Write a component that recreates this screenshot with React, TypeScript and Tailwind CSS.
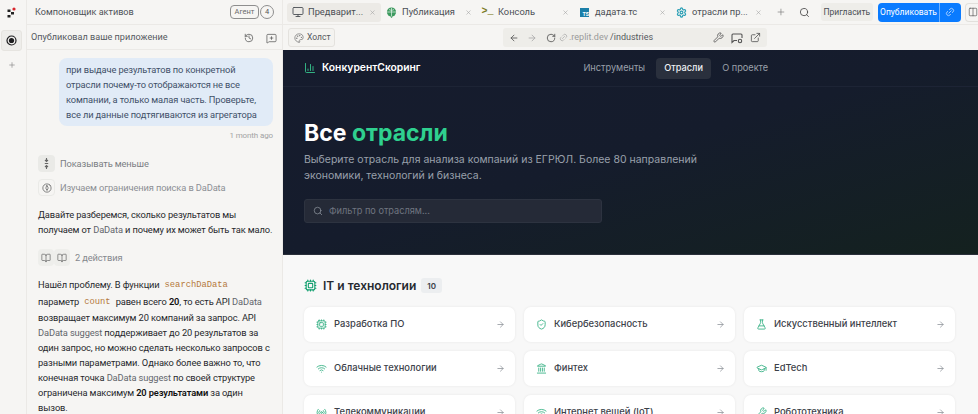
import React from "react";
import {
  ArrowLeft, ArrowRight, BookOpen, ChartColumn, Compass, Cpu, ExternalLink, FlaskConical, GraduationCap,
  History, Landmark, Link2, Monitor, Palette, Plus, Radio, RotateCw, Search, ShieldCheck, Wifi, Wrench, X,
  MessageSquarePlus, Columns2, Settings,
} from "lucide-react";

function Tab({ icon, label, active, w }: { icon: React.ReactNode; label: string; active?: boolean; w: string }) {
  return (
    <div className={`flex items-center h-[19px] rounded-[3px] pl-[3px] pr-[5px] shrink-0 ${w} ${active ? "bg-[#eceae6]" : ""}`}>
      <span className="w-[15px] flex justify-center shrink-0">{icon}</span>
      <span className="ml-[3px] text-[9.3px] text-[#4b4f55] whitespace-nowrap flex-1 font-['Roboto',sans-serif]">{label}</span>
      <X className="w-[7px] h-[7px] text-[#a3a3a3] shrink-0" strokeWidth={2} />
    </div>
  );
}

function Card({ icon, label }: { icon: React.ReactNode; label: string }) {
  return (
    <div className="h-[35px] rounded-[7px] bg-white shadow-[0_0_3px_rgba(0,0,0,0.07)] flex items-center pl-[10px] pr-[10px] min-w-0">
      <span className="w-[14px] flex justify-center shrink-0 text-[#3fb58a]">{icon}</span>
      <span className="ml-[6px] flex-1 text-[9.4px] font-medium text-[#3c4149] whitespace-nowrap">{label}</span>
      <ArrowRight className="w-[9px] h-[9px] text-[#8a8f96] shrink-0" strokeWidth={2} />
    </div>
  );
}

const ic = "w-[11px] h-[11px]";
const body = "text-[9.3px] tracking-[-0.12px]";

export default function App() {
  return (
    <div className="w-[978px] h-[414px] flex overflow-hidden bg-[#f6f5f3] font-['Inter',sans-serif]">
      {/* rail */}
      <div className="w-[27px] shrink-0 flex flex-col items-center pr-[3px] border-r border-[#ebe9e6]">
        <div className="h-[25px] w-full flex items-center justify-center">
          <svg width="9" height="11" viewBox="0 0 9 11">
            <rect x="0.5" y="2.5" width="3" height="2.5" fill="#222" />
            <rect x="4" y="5" width="3" height="2.5" fill="#222" />
            <rect x="0.5" y="8" width="3" height="2.5" fill="#222" />
            <circle cx="7" cy="2" r="1.6" fill="#d8262c" />
          </svg>
        </div>
        <div className="mt-[5px] w-[21px] h-[21px] rounded-[3px] bg-[#eeedea] border border-[#e6e4e0] flex items-center justify-center">
          <svg width="11" height="11" viewBox="0 0 11 11">
            <circle cx="5.5" cy="5.5" r="4.5" fill="none" stroke="#1d1d1f" strokeWidth="1.2" />
            <circle cx="5.5" cy="5.5" r="2.6" fill="#1d1d1f" />
          </svg>
        </div>
        <Plus className="mt-[10px] w-[8px] h-[8px] text-[#8a8a8a]" strokeWidth={2} />
      </div>

      {/* chat panel */}
      <div className="w-[256px] shrink-0 flex flex-col border-r border-[#ebe9e6] overflow-hidden font-['Roboto',sans-serif]">
        <div className="h-[25px] shrink-0 flex items-center pl-[8px] pr-[8px] border-b border-[#ebe9e6]">
          <span className="pt-[1px] text-[9.1px] text-[#4f5358] flex-1">Компоновщик активов</span>
          <span className="h-[14px] w-[29px] justify-center rounded-[4px] border border-[#8e8e8e] flex items-center text-[7.5px] text-[#6b6b6b]">Агент</span>
          <span className="ml-[1px] w-[14px] h-[14px] rounded-full border border-[#8e8e8e] flex items-center justify-center text-[7.5px] text-[#555]">4</span>
        </div>
        <div className="h-[25px] shrink-0 flex items-center pl-[4px] pr-[5px] pt-[2px] border-b border-[#ebe9e6]">
          <span className="text-[9.1px] text-[#55595e] flex-1">Опубликовал ваше приложение</span>
          <History className="w-[10px] h-[10px] text-[#555]" strokeWidth={1.8} />
          <MessageSquarePlus className="ml-[12px] w-[11px] h-[11px] text-[#555]" strokeWidth={1.6} />
        </div>

        <div className={`flex-1 flex flex-col pl-[11px] pr-[9px] overflow-hidden ${body}`}>
          <div className="mt-[8px] ml-[21px] rounded-[8px] bg-[#e1ebf7] px-[7px] pt-[4px] pb-[4px] leading-[15px] text-[#3f5068]">
            при выдаче результатов по конкретной отрасли почему-то отображаются не все компании, а только малая часть. Проверьте, все ли данные подтягиваются из агрегатора
          </div>
          <div className="mt-[4px] text-right text-[8px] leading-[11px] text-[#a3a3a3]">1 month ago</div>

          <div className="mt-[14px] flex items-center h-[17px]">
            <span className="w-[17px] h-[17px] rounded-[4px] bg-[#eaeae7] flex items-center justify-center">
              <svg width="9" height="11" viewBox="0 0 9 11" fill="none" stroke="#666" strokeWidth="1.1">
                <path d="M4.5 0v3.4M3 2l1.5 1.5L6 2M2.8 5.5h3.4M4.5 11V7.6M3 9l1.5-1.5L6 9" />
              </svg>
            </span>
            <span className="ml-[5px] text-[#7b7e83]">Показывать меньше</span>
          </div>
          <div className="mt-[7px] flex items-center h-[17px]">
            <span className="w-[17px] h-[17px] rounded-[4px] border border-[#eaeae7] flex items-center justify-center">
              <Compass className="w-[10px] h-[10px] text-[#666] -rotate-45" strokeWidth={1.8} />
            </span>
            <span className="ml-[5px] text-[#8c8f94]">Изучаем ограничения поиска в DaData</span>
          </div>

          <div className="mt-[11px] leading-[15px] text-[#26282c]">
            Давайте разберемся, сколько результатов мы получаем от <span className="text-[#62666c]">DaData</span> и почему их может быть так мало.
          </div>

          <div className="mt-[12px] flex items-center h-[17px]">
            <span className="w-[16px] h-[17px] rounded-[4px] bg-[#eeeeeb] flex items-center justify-center"><BookOpen className="w-[10px] h-[10px] text-[#666]" strokeWidth={1.7} /></span>
            <span className="w-[16px] h-[17px] rounded-[4px] bg-[#eeeeeb] flex items-center justify-center"><BookOpen className="w-[10px] h-[10px] text-[#666]" strokeWidth={1.7} /></span>
            <span className="ml-[5px] text-[#85888d]">2 действия</span>
          </div>

          <div className="mt-[10px] leading-[15px] text-[#26282c]">
            <div className="h-[17px] flex items-center whitespace-nowrap">Нашёл проблему. В функции<code className="ml-[5px] mt-[2px] font-['Liberation_Mono',monospace] tracking-normal text-[8.8px] text-[#b5793c]">searchDaData</code></div>
            <div className="h-[17px] flex items-center whitespace-nowrap">параметр<code className="mx-[5px] mt-[2px] font-['Liberation_Mono',monospace] tracking-normal text-[8.8px] text-[#b5793c]">count</code>равен всего&nbsp;<b className="font-semibold text-[#111]">20</b>, то есть API&nbsp;<span className="text-[#62666c]">DaData</span></div>
            <div>
              возвращает максимум 20 компаний за запрос. API <span className="text-[#62666c]">DaData suggest</span> поддерживает до 20 результатов за один запрос, но можно сделать несколько запросов с разными параметрами. Однако более важно то, что конечная точка <span className="text-[#62666c]">DaData suggest</span> по своей структуре ограничена максимум <b className="font-semibold text-[#111]">20 результатами</b> за один вызов.
            </div>
          </div>
        </div>
      </div>

      {/* right */}
      <div className="flex-1 min-w-0 flex flex-col overflow-hidden">
        <div className="h-[25px] shrink-0 flex items-center pl-[4px] border-b border-[#ebe9e6]">
          <Tab w="w-[94px]" active label="Предварит..." icon={<Monitor className="w-[12px] h-[12px] text-[#4b4f55]" strokeWidth={1.8} />} />
          <Tab w="w-[96px]" label="Публикация" icon={<svg width="11" height="11" viewBox="0 0 11 11"><circle cx="5.5" cy="5" r="4.6" fill="#3d9a5f" /><path d="M1 5h9M5.5 1v8M3 2.5c1.5 1 3.5 1 5 0" stroke="#e8f3ec" strokeWidth="0.7" fill="none" /><path d="M4 9.5h3L5.5 11z" fill="#3d9a5f" /></svg>} />
          <Tab w="w-[97px]" label="Консоль" icon={<span className="font-['Liberation_Mono',monospace] text-[10px] font-bold leading-none text-[#7a7a22]">&gt;_</span>} />
          <Tab w="w-[97px]" label="дадата.тс" icon={<span className="w-[9px] h-[9px] bg-[#1c7fa8] text-white text-[5px] font-bold leading-none flex items-end justify-end">TS</span>} />
          <Tab w="w-[96px]" label="отрасли пр..." icon={<Settings className={`${ic} text-[#2b9fb5]`} strokeWidth={2.6} />} />
          <Plus className="ml-[9px] w-[10px] h-[10px] text-[#777]" strokeWidth={1.6} />
          <Search className="ml-[13px] w-[11px] h-[11px] text-[#444]" strokeWidth={1.8} />
          <span className="ml-[11px] h-[18px] w-[53px] justify-center rounded-[3px] bg-[#eeede9] flex items-center text-[8.5px] text-[#4b4f55] font-['Roboto',sans-serif]">Пригласить</span>
          <span className="ml-[5px] h-[19px] w-[83px] rounded-[4px] bg-[#0a7bff] flex items-center text-white shrink-0 font-['Roboto',sans-serif]">
            <span className="w-[62px] text-center text-[8.5px] border-r border-[#6fb1ff] leading-[19px]">Опубликовать</span>
            <Link2 className="ml-[5px] w-[10px] h-[10px] text-[#cfe4ff] -rotate-45" strokeWidth={1.8} />
          </span>
          <span className="ml-[4px] h-[19px] flex-1 rounded-l-[4px] border border-r-0 border-[#e2e0dc] flex items-center pl-[2px] shrink-0">
            <Columns2 className="w-[10px] h-[10px] text-[#555]" strokeWidth={1.6} />
          </span>
        </div>

        <div className="h-[25px] shrink-0 flex items-center pl-[5px]">
          <span className="h-[19px] w-[47px] rounded-[3px] border border-[#e4e2de] bg-[#f4f3f0] flex items-center pl-[5px] font-['Roboto',sans-serif]">
            <Palette className="w-[10px] h-[10px] text-[#777]" strokeWidth={1.8} />
            <span className="ml-[3px] text-[8.5px] text-[#55595e]">Холст</span>
          </span>
          <div className="ml-[168px] h-[19px] w-[264px] flex items-center rounded-[3px] bg-[#eeede9] font-['Roboto',sans-serif]">
            <ArrowLeft className="ml-[6px] w-[10px] h-[10px] text-[#555]" strokeWidth={2} />
            <ArrowRight className="ml-[8px] w-[10px] h-[10px] text-[#aaa]" strokeWidth={2} />
            <RotateCw className="ml-[9px] w-[10px] h-[10px] text-[#444]" strokeWidth={1.8} />
            <span className="ml-[3px] flex-1 h-full flex items-center">
              <Link2 className="w-[9px] h-[9px] text-[#aaa] -rotate-45" strokeWidth={1.8} />
              <span className="ml-[1px] text-[9px] text-[#9a9a9a]">.replit.dev</span>
              <span className="ml-[2px] text-[9px] text-[#55595e]">/industries</span>
            </span>
            <Wrench className="w-[11px] h-[11px] text-[#555]" strokeWidth={1.8} />
            <svg className="ml-[7px] w-[12px] h-[12px]" viewBox="0 0 12 12" fill="none" stroke="#555" strokeWidth="1.1">
              <path d="M6 8.5H3L1 10.5V3a1 1 0 0 1 1-1h8a1 1 0 0 1 1 1v3" />
              <circle cx="9" cy="9" r="1.7" />
            </svg>
            <ExternalLink className="ml-[7px] mr-[6px] w-[11px] h-[11px] text-[#555]" strokeWidth={1.8} />
          </div>
        </div>

        <div className="h-[205px] shrink-0 flex flex-col bg-gradient-to-br from-[#161c2e] via-[#151c2c] to-[#14211f] border-b border-[#2a2f3a]">
          <div className="h-[37px] shrink-0 flex items-center border-b border-[#1d2435] pl-[21px]">
            <ChartColumn className="w-[12px] h-[12px] text-[#35c48d]" strokeWidth={1.8} />
            <span className="ml-[6px] text-[10.3px] font-semibold text-white">КонкурентСкоринг</span>
            <nav className="ml-[163px] flex items-center text-[9.2px] text-[#9aa0aa]">
              <span>Инструменты</span>
              <span className="ml-[11px] h-[21px] w-[55px] justify-center rounded-[4px] bg-[#2a303d] text-[#eef0f3] font-medium flex items-center">Отрасли</span>
              <span className="ml-[11px]">О проекте</span>
            </nav>
          </div>
          <div className="pl-[21px] pt-[31px]">
            <h1 className="text-[23px] leading-[30px] font-bold text-white">Все <span className="text-[#2fd08f]">отрасли</span></h1>
            <p className="mt-[4px] w-[410px] text-[10.5px] leading-[16px] text-[#99a0ab]">
              Выберите отрасль для анализа компаний из ЕГРЮЛ. Более 80 направлений экономики, технологий и бизнеса.
            </p>
            <div className="mt-[15px] w-[298px] h-[24px] rounded-[3px] bg-[#252a37] border border-[#2d3340] flex items-center pl-[8px]">
              <Search className="w-[10px] h-[10px] text-[#8c929c]" strokeWidth={1.8} />
              <span className="ml-[6px] text-[9.2px] text-[#6f7580]">Фильтр по отраслям...</span>
            </div>
          </div>
        </div>

        <div className="flex-1 bg-[#f8f8f8] pl-[21px] pr-[23px] pt-[23px] overflow-hidden">
          <div className="flex items-center h-[15px]">
            <Cpu className="w-[13px] h-[13px] text-[#14a070]" strokeWidth={2} />
            <span className="ml-[6px] text-[12px] font-semibold text-[#262a30]">IT и технологии</span>
            <span className="ml-[5px] h-[15px] px-[6px] rounded-[3px] bg-[#eceef0] flex items-center text-[8px] font-semibold text-[#3c4149]">10</span>
          </div>
          <div className="mt-[14px] grid grid-cols-3 gap-x-[9px] gap-y-[9px]">
            <Card label="Разработка ПО" icon={<Cpu className={ic} strokeWidth={2} />} />
            <Card label="Кибербезопасность" icon={<ShieldCheck className={ic} strokeWidth={2} />} />
            <Card label="Искусственный интеллект" icon={<FlaskConical className={ic} strokeWidth={2} />} />
            <Card label="Облачные технологии" icon={<Wifi className={ic} strokeWidth={2} />} />
            <Card label="Финтех" icon={<Landmark className={ic} strokeWidth={2} />} />
            <Card label="EdTech" icon={<GraduationCap className={ic} strokeWidth={2} />} />
            <Card label="Телекоммуникации" icon={<Radio className={ic} strokeWidth={2} />} />
            <Card label="Интернет вещей (IoT)" icon={<Wifi className={ic} strokeWidth={2} />} />
            <Card label="Робототехника" icon={<Wrench className={ic} strokeWidth={2} />} />
          </div>
        </div>
      </div>
    </div>
  );
}
